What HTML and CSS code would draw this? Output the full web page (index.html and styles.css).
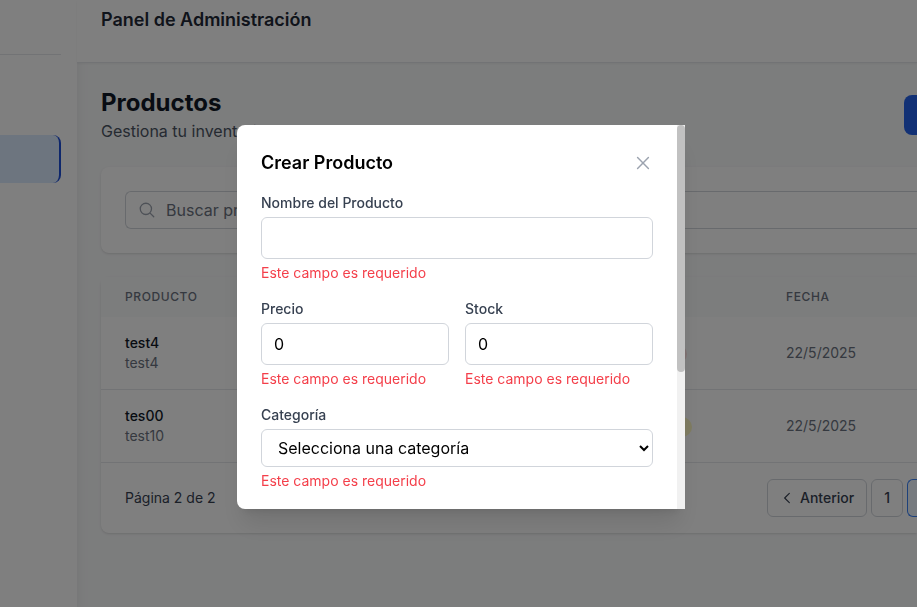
FILE: index.html
```html
<!DOCTYPE html>
<html lang="es">
<head>
<meta charset="utf-8">
<meta name="viewport" content="width=device-width, initial-scale=1">
<title>Panel de Administración</title>
<link rel="stylesheet" href="styles.css">
</head>
<body>
<div class="app">
  <aside class="sidebar">
    <div class="sidebar-brand"></div>
    <nav class="sidebar-nav"><a class="nav-active" href="#" aria-label="Productos"></a></nav>
  </aside>
  <div class="main">
    <header class="topbar"><h2 class="topbar-title">Panel de Administración</h2></header>
    <main class="content">
      <div class="page-head">
        <div>
          <h1 class="page-title">Productos</h1>
          <p class="page-subtitle">Gestiona tu inventario de productos</p>
        </div>
        <button class="new-button" type="button" aria-label="Crear producto"></button>
      </div>
      <section class="card search-card">
        <div class="search-box">
          <svg class="search-icon" viewBox="0 0 24 24" aria-hidden="true"><path d="m21 21-5.197-5.197m0 0A7.5 7.5 0 1 0 5.196 5.196a7.5 7.5 0 0 0 10.607 10.607Z"/></svg>
          <input class="search-input" type="text" placeholder="Buscar productos..." aria-label="Buscar productos">
        </div>
      </section>
      <section class="card table-card">
        <table class="products">
          <thead>
            <tr><th>Producto</th><th class="col-stock"></th><th class="col-date">Fecha</th></tr>
          </thead>
          <tbody>
            <tr>
              <td><div class="name">test4</div><div>test4</div></td>
              <td><span class="badge badge-red"></span></td>
              <td>22/5/2025</td>
            </tr>
            <tr>
              <td><div class="name">tes00</div><div>test10</div></td>
              <td><span class="badge badge-yellow"></span></td>
              <td>22/5/2025</td>
            </tr>
          </tbody>
        </table>
        <div class="table-foot">
          <span class="page-info">Página 2 de 2</span>
          <div class="pager">
            <button class="page-button prev-button" type="button"><svg class="chevron" viewBox="0 0 24 24" aria-hidden="true"><path d="M14 19 7 12l7-7"/></svg>Anterior</button>
            <button class="page-button" type="button">1</button>
            <button class="page-button page-current" type="button" aria-label="Página 2"></button>
          </div>
        </div>
      </section>
    </main>
  </div>
</div>
<div class="overlay">
  <div class="modal" role="dialog" aria-modal="true" aria-labelledby="modal-title">
    <div class="modal-body">
      <div class="modal-head">
        <h3 class="modal-title" id="modal-title">Crear Producto</h3>
        <button class="close-button" type="button" aria-label="Cerrar"><svg class="close-icon" viewBox="0 0 24 24" aria-hidden="true"><path d="M5.5 18.500 18.500 5.500M5.500 5.500l13 13"/></svg></button>
      </div>
      <form class="form">
        <div class="field">
          <label for="name">Nombre del Producto</label>
          <input class="control" id="name" type="text">
          <p class="error">Este campo es requerido</p>
        </div>
        <div class="field-row">
          <div class="field">
            <label for="price">Precio</label>
            <input class="control" id="price" type="number" value="0">
            <p class="error">Este campo es requerido</p>
          </div>
          <div class="field">
            <label for="stock">Stock</label>
            <input class="control" id="stock" type="number" value="0">
            <p class="error">Este campo es requerido</p>
          </div>
        </div>
        <div class="field">
          <label for="category">Categoría</label>
          <select class="control control-select" id="category"><option>Selecciona una categoría</option></select>
          <p class="error">Este campo es requerido</p>
        </div>
      </form>
    </div>
    <div class="scroll-track" aria-hidden="true"><div class="scroll-thumb"></div></div>
  </div>
</div>
</body>
</html>
```
FILE: styles.css
```css
* { box-sizing: border-box; margin: 0; }

body {
  font: 16px/24px Inter, "Liberation Sans", sans-serif;
  color: #111827;
  overflow: hidden;
}

button, input, select { font: inherit; color: inherit; }
svg { fill: none; stroke: currentColor; stroke-linecap: round; stroke-linejoin: round; stroke-width: 1.75; }

/* Shell */
.app { display: flex; min-height: 100vh; background: #f9fafb; }

.sidebar {
  flex: none;
  width: 77px;
  padding-right: 16px;
  background: #fff;
  box-shadow: 0 10px 15px -3px rgb(0 0 0 / 10%), 0 4px 6px -4px rgb(0 0 0 / 10%);
}
.sidebar-brand { height: 55px; border-bottom: 1px solid #e5e7eb; }
.sidebar-nav { padding-top: 80px; }
.nav-active {
  display: block;
  height: 48px;
  background: #dbeafe;
  border-right: 2px solid #1d4ed8;
  border-radius: 0 8px 8px 0;
}

.main { flex: 1; min-width: 0; }
.topbar {
  height: 63px;
  padding: 6px 24px;
  background: #fff;
  border-bottom: 1px solid #e5e7eb;
  box-shadow: 0 1px 2px rgb(0 0 0 / 5%);
}
.topbar-title { font-size: 18px; line-height: 28px; font-weight: 600; color: #1f2937; }

.content { display: grid; gap: 24px; padding: 24px 0 24px 24px; }
.page-head { display: flex; justify-content: space-between; align-items: center; }
.page-title { font-size: 24px; line-height: 32px; font-weight: 700; }
.page-subtitle { color: #4b5563; }
.new-button {
  width: 13px;
  height: 40px;
  padding: 0;
  border: 0;
  border-radius: 8px 0 0 8px;
  background: #2563eb;
}

.card {
  min-width: 0;
  background: #fff;
  border-radius: 8px 0 0 8px;
  box-shadow: 0 1px 3px rgb(0 0 0 / 10%), 0 1px 2px -1px rgb(0 0 0 / 10%);
}

/* Search */
.search-card { padding: 24px 0 24px 24px; }
.search-box {
  display: flex;
  align-items: center;
  gap: 10px;
  height: 38px;
  padding-left: 12px;
  border: 1px solid #d1d5db;
  border-right: 0;
  border-radius: 6px 0 0 6px;
}
.search-icon { flex: none; width: 18px; height: 18px; color: #9ca3af; }
.search-input { flex: 1; min-width: 0; padding: 0; border: 0; outline: 0; background: none; }
.search-input::placeholder { color: #6b7280; }

/* Table */
.table-card { overflow: clip; overflow-clip-margin: 4px; }
.products {
  width: 100%;
  table-layout: fixed;
  border-collapse: separate;
  border-spacing: 0;
  font-size: 14px;
  line-height: 20px;
  color: #6b7280;
}
.products th {
  padding: 12px 24px;
  background: #f9fafb;
  font-size: 12px;
  line-height: 16px;
  font-weight: 500;
  letter-spacing: 0.05em;
  text-align: left;
  text-transform: uppercase;
}
.products td { padding: 16px 24px; border-bottom: 1px solid #e5e7eb; }
.products .col-stock { width: 180px; }
.products .col-date { width: 155px; }
.name { font-weight: 500; color: #111827; }
.badge { display: inline-block; height: 20px; border-radius: 10px; vertical-align: middle; }
.badge-red { width: 81px; background: #fee2e2; }
.badge-yellow { width: 86px; background: #fef9c3; }

.table-foot {
  display: flex;
  align-items: center;
  justify-content: space-between;
  padding: 16px 0 16px 24px;
  font-size: 14px;
  line-height: 20px;
  color: #374151;
}
.pager { display: flex; gap: 4px; }
.page-button {
  display: flex;
  align-items: center;
  height: 38px;
  padding: 0 12px;
  border: 1px solid #d1d5db;
  border-radius: 6px;
  background: #fff;
  font-weight: 500;
}
.prev-button { gap: 4px; }
.chevron { width: 16px; height: 16px; }
.page-current {
  width: 10px;
  padding: 0;
  border-color: #3b82f6;
  border-right: 0;
  border-radius: 6px 0 0 6px;
  background: #eff6ff;
}

/* Modal */
.overlay {
  position: fixed;
  inset: 0;
  display: flex;
  justify-content: center;
  align-items: flex-start;
  padding: 125px 16px 16px 21px;
  background: rgb(0 0 0 / 50%);
}
.modal {
  display: flex;
  width: 100%;
  max-width: 448px;
  overflow: hidden;
  background: #fff;
  border-radius: 8px 0 0 8px;
  box-shadow: 0 20px 25px -5px rgb(0 0 0 / 10%), 0 8px 10px -6px rgb(0 0 0 / 10%);
}
.modal-body { flex: 1; min-width: 0; padding: 24px 24px 18px; }
.modal-head { display: flex; justify-content: space-between; align-items: center; margin-bottom: 16px; }
.modal-title { font-size: 18px; line-height: 28px; font-weight: 600; color: #000; }
.close-button { display: flex; padding: 0; border: 0; background: none; color: #9ca3af; }
.close-icon { width: 20px; height: 20px; }

.form { display: grid; gap: 16px; }
.field { display: grid; gap: 4px; min-width: 0; font-size: 14px; line-height: 20px; }
.field-row { display: grid; grid-template-columns: 1fr 1fr; gap: 16px; }
.field label { font-weight: 500; color: #374151; }
.control {
  width: 100%;
  height: 42px;
  padding: 8px 12px;
  border: 1px solid #d1d5db;
  border-radius: 6px;
  background: #fff;
  font-size: 16px;
  line-height: 24px;
  color: #000;
}
.control-select { height: 38px; padding: 0 12px; }
.error { color: #f43f4a; }

.scroll-track { flex: none; width: 8px; background: #f1f1f1; }
.scroll-thumb { height: 247px; border-radius: 4px; background: #c1c1c1; }
```
